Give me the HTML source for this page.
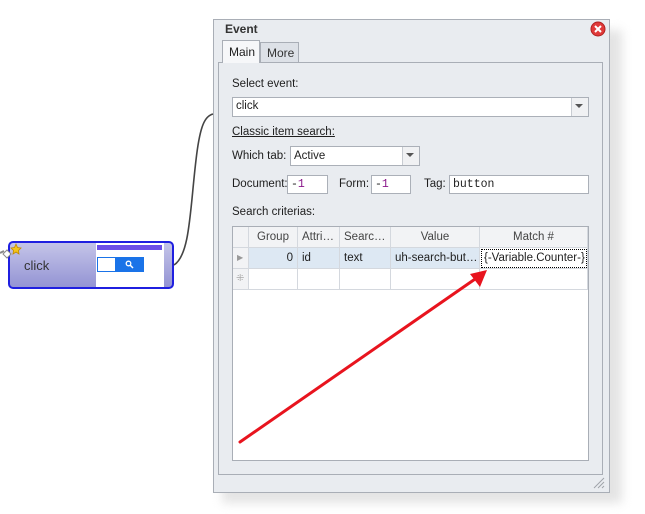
<!DOCTYPE html>
<html><head><style>
body{margin:0;width:645px;height:514px;background:#fff;position:relative;overflow:hidden;font-family:"Liberation Sans","DejaVu Sans",sans-serif;font-size:11.5px;color:#1e1e1e}
.a{position:absolute;box-sizing:border-box}
.inp{background:#fff;border:1px solid #abb0b8}
.mono{font-family:"Liberation Mono",monospace;font-size:11.5px}
.t{position:absolute;white-space:nowrap}
.cell{position:absolute;box-sizing:border-box;border-right:1px solid #d4d8de;border-bottom:1px solid #d4d8de;padding:0 4px;line-height:20px;white-space:nowrap;overflow:hidden}
</style></head><body>
<div class="a" style="left:222px;top:30px;width:400px;height:473px;background:#e4e4e4;filter:blur(5px)"></div>
<div class="a" style="left:213px;top:19px;width:397px;height:474px;background:#e9ecf0;border:1px solid #a9aeb6"></div>
<div class="t" style="left:225px;top:22px;font-weight:bold;font-size:12px;color:#333">Event</div>
<svg class="a" style="left:590px;top:21px" width="16" height="16"><circle cx="8" cy="8" r="7" fill="#e03a3a" stroke="#b02020"/><path d="M5 5L11 11M11 5L5 11" stroke="#fff" stroke-width="2"/></svg>
<div class="a" style="left:218px;top:62px;width:385px;height:413px;border:1px solid #a9aeb6;background:#e9ecf0"></div>
<div class="a" style="left:260px;top:42px;width:39px;height:21px;border:1px solid #a9aeb6;background:#dde1e7"></div>
<div class="t" style="left:267px;top:46px;color:#333;font-size:12px">More</div>
<div class="a" style="left:222px;top:40px;width:38px;height:23px;border:1px solid #a9aeb6;border-bottom:none;background:#f6f7f9"></div>
<div class="t" style="left:229px;top:45px;font-size:12px">Main</div>
<div class="t" style="left:232px;top:78px">Select event:</div>
<div class="a inp" style="left:232px;top:97px;width:357px;height:20px"></div>
<div class="t" style="left:236px;top:100px">click</div>
<div class="a" style="left:571px;top:98px;width:17px;height:18px;border-left:1px solid #c8ccd2;background:#f0f1f3"></div>
<svg class="a" style="left:575px;top:104px" width="9" height="5"><path d="M0 0H8L4 4Z" fill="#555"/></svg>
<div class="t" style="left:232px;top:126px;text-decoration:underline">Classic item search:</div>
<div class="t" style="left:232px;top:150px">Which tab:</div>
<div class="a inp" style="left:290px;top:146px;width:130px;height:20px"></div>
<div class="t" style="left:294px;top:150px">Active</div>
<div class="a" style="left:402px;top:147px;width:17px;height:18px;border-left:1px solid #c8ccd2;background:#f0f1f3"></div>
<svg class="a" style="left:406px;top:153px" width="9" height="5"><path d="M0 0H8L4 4Z" fill="#555"/></svg>
<div class="t" style="left:232px;top:178px">Document:</div>
<div class="a inp" style="left:287px;top:175px;width:41px;height:19px"></div>
<div class="t mono" style="left:291px;top:178px">-<span style="color:#8a168a">1</span></div>
<div class="t" style="left:339px;top:178px">Form:</div>
<div class="a inp" style="left:371px;top:175px;width:40px;height:19px"></div>
<div class="t mono" style="left:375px;top:178px">-<span style="color:#8a168a">1</span></div>
<div class="t" style="left:424px;top:178px">Tag:</div>
<div class="a inp" style="left:449px;top:175px;width:140px;height:19px"></div>
<div class="t mono" style="left:453px;top:178px">button</div>
<div class="t" style="left:232px;top:206px">Search criterias:</div>
<div class="a" style="left:232px;top:226px;width:357px;height:235px;border:1px solid #a9aeb6;background:#fff"></div>
<div class="a" style="left:233px;top:227px;width:355px;height:20px;background:#f2f3f5"></div>
<div class="a" style="left:249px;top:247px;width:339px;height:21px;background:#dde8f3"></div>
<div class="a" style="left:233px;top:247px;width:16px;height:42px;background:#f2f3f5"></div>
<div class="cell" style="left:233px;top:227px;width:16px;height:21px"></div>
<div class="cell" style="left:249px;top:227px;width:49px;height:21px;text-align:center;color:#444">Group</div>
<div class="cell" style="left:298px;top:227px;width:42px;height:21px;color:#444">Attri…</div>
<div class="cell" style="left:340px;top:227px;width:51px;height:21px;color:#444">Searc…</div>
<div class="cell" style="left:391px;top:227px;width:89px;height:21px;text-align:center;color:#444">Value</div>
<div class="cell" style="left:480px;top:227px;width:108px;height:21px;text-align:center;color:#444">Match #</div>
<div class="cell" style="left:233px;top:248px;width:16px;height:21px;color:#999;font-size:8px">▶</div>
<div class="cell" style="left:249px;top:248px;width:49px;height:21px;text-align:right">0</div>
<div class="cell" style="left:298px;top:248px;width:42px;height:21px">id</div>
<div class="cell" style="left:340px;top:248px;width:51px;height:21px">text</div>
<div class="cell" style="left:391px;top:248px;width:89px;height:21px">uh-search-but…</div>
<div class="cell" style="left:480px;top:248px;width:108px;height:21px;background:#fff;outline:1px dotted #000;outline-offset:-2px;padding-left:4px">{-Variable.Counter-}</div>
<div class="cell" style="left:233px;top:269px;width:16px;height:21px;color:#aaa;font-size:10px;padding:0 3px">⁜</div>
<div class="cell" style="left:249px;top:269px;width:49px;height:21px"></div>
<div class="cell" style="left:298px;top:269px;width:42px;height:21px"></div>
<div class="cell" style="left:340px;top:269px;width:51px;height:21px"></div>
<div class="cell" style="left:391px;top:269px;width:89px;height:21px"></div>
<div class="cell" style="left:480px;top:269px;width:108px;height:21px"></div>
<svg class="a" style="left:592px;top:476px" width="14" height="14"><path d="M12 2L2 12M12 6L6 12M12 10L10 12" stroke="#a0a4aa"/></svg>
<div class="a" style="left:8px;top:241px;width:166px;height:48px;border:2px solid #1f1fe0;border-radius:5px;background:linear-gradient(#c4c4e8,#9494d4)"></div>
<div class="t" style="left:24px;top:258px;font-size:13px;color:#333">click</div>
<div class="a" style="left:96px;top:243px;width:68px;height:44px;background:#fff"></div>
<div class="a" style="left:97px;top:245px;width:65px;height:5px;background:#6c4fe8"></div>
<div class="a" style="left:97px;top:257px;width:18px;height:15px;border:1px solid #1a73e8;border-right:none"></div>
<div class="a" style="left:115px;top:257px;width:29px;height:15px;background:#1a73e8"></div>
<svg class="a" style="left:125px;top:260px" width="9" height="9"><circle cx="3.5" cy="3.5" r="2.3" stroke="#fff" fill="none" stroke-width="1.3"/><path d="M5 5L8 8" stroke="#fff" stroke-width="1.5"/></svg>
<svg class="a" style="left:0;top:240px" width="24" height="24"><path d="M0 13L4 11" stroke="#888" stroke-width="2"/><path d="M3 14L7 10L11 14L7 18Z" fill="#fff" stroke="#888"/><path d="M16 4L17.5 7.5L21 8L18.5 10.5L19 14L16 12L13 14L13.5 10.5L11 8L14.5 7.5Z" fill="#f5c518" stroke="#c08a00" stroke-width=".8"/></svg>
<svg class="a" style="left:0;top:0" width="645" height="514">
<path d="M174 265C190 255 190 210 196 160C200 125 205 116 213 114" stroke="#444" stroke-width="1.6" fill="none"/>
<path d="M240 442L478 277" stroke="#e8141e" stroke-width="3" stroke-linecap="round"/>
<path d="M487 270L470 274L480 287Z" fill="#e8141e"/>
</svg>
</body></html>
